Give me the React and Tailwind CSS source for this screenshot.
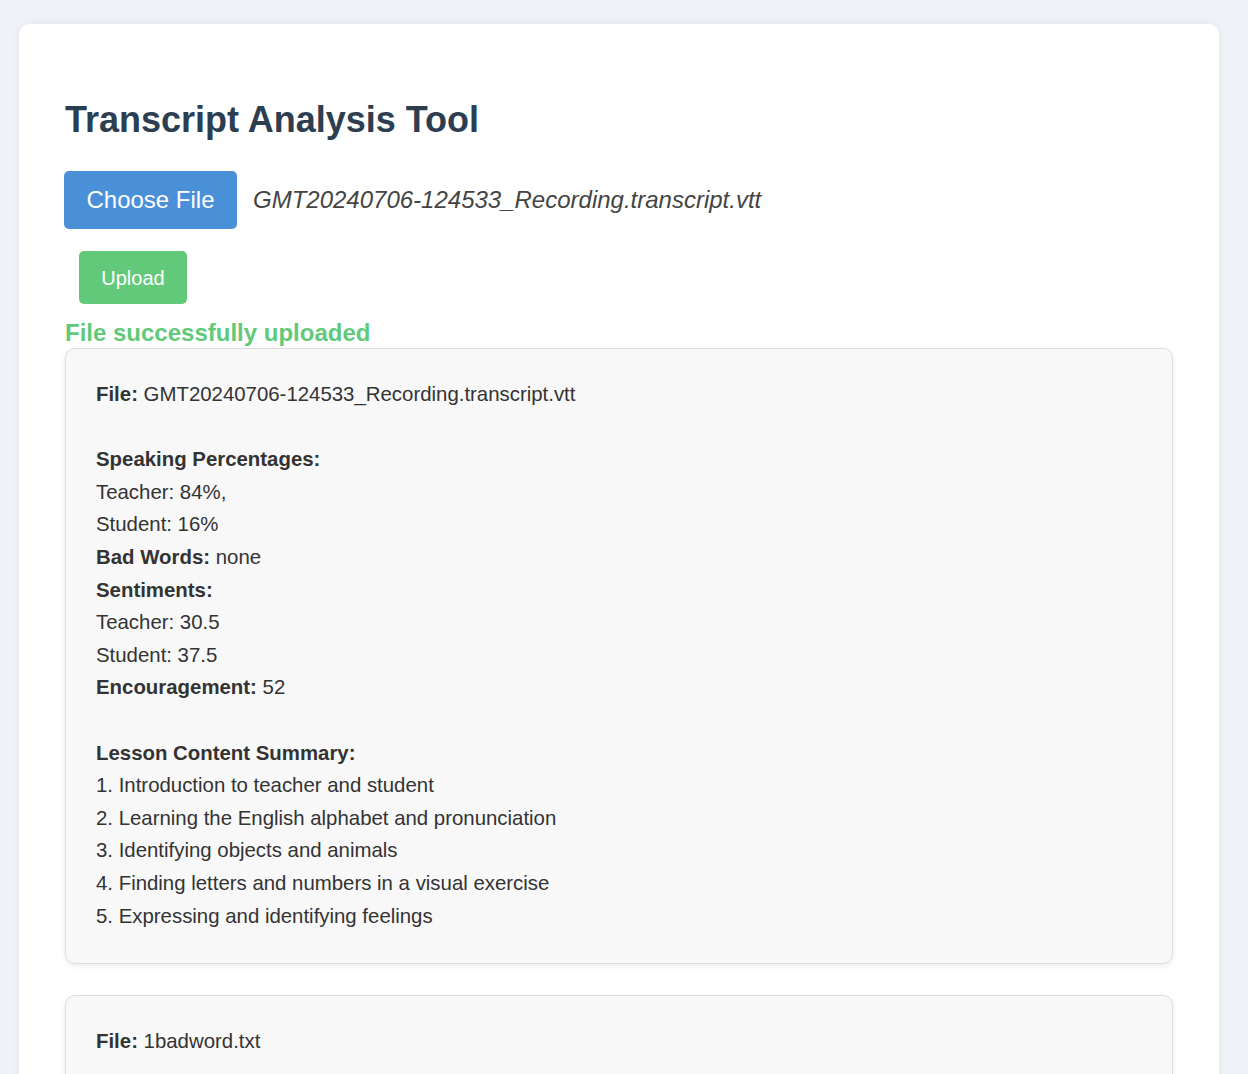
export default function App() {
  const font = { fontFamily: '"Liberation Sans", Arial, sans-serif' };
  const box = "bg-[#f8f8f8] border border-[#dddddd] rounded-[10px] shadow-[0_2px_6px_rgba(0,0,0,0.08)] px-[30px] pt-[29px] pb-[31px] text-[20.4px] leading-[32.6px] text-[#333]";
  return (
    <div className="min-h-[1074px] bg-[#eff2f6] pt-[24px] pl-[19px]" style={font}>
      <div className="w-[1200px] bg-white rounded-[10px] shadow-[0_0_10px_rgba(0,0,0,0.06)] px-[46px] pt-[76px] pb-[40px]">
        <h1 className="text-[36px] font-bold text-[#2c3e50] leading-[41px] mt-[-1px]">Transcript Analysis Tool</h1>
        <div className="flex items-center mt-[31px]">
          <button className="h-[58px] w-[173px] bg-[#4a90d9] text-white text-[24px] rounded-[5px] ml-[-1px]">Choose File</button>
          <span className="ml-[16px] text-[24px] italic text-[#444]">GMT20240706-124533_Recording.transcript.vtt</span>
        </div>
        <button className="mt-[22px] ml-[14px] h-[53px] w-[108px] bg-[#62c97a] text-white text-[20px] rounded-[5px]">Upload</button>
        <div className="mt-[15px] text-[24px] font-bold text-[#62c97a] leading-[28px]">File successfully uploaded</div>
        <div className={"mt-[1px] " + box}>
          <div><b>File:</b> GMT20240706-124533_Recording.transcript.vtt</div>
          <div>&nbsp;</div>
          <div><b>Speaking Percentages:</b></div>
          <div>Teacher: 84%,</div>
          <div>Student: 16%</div>
          <div><b>Bad Words:</b> none</div>
          <div><b>Sentiments:</b></div>
          <div>Teacher: 30.5</div>
          <div>Student: 37.5</div>
          <div><b>Encouragement:</b> 52</div>
          <div>&nbsp;</div>
          <div><b>Lesson Content Summary:</b></div>
          <div>1. Introduction to teacher and student</div>
          <div>2. Learning the English alphabet and pronunciation</div>
          <div>3. Identifying objects and animals</div>
          <div>4. Finding letters and numbers in a visual exercise</div>
          <div>5. Expressing and identifying feelings</div>
        </div>
        <div className={"mt-[31px] " + box}>
          <div><b>File:</b> 1badword.txt</div>
          <div>&nbsp;</div>
          <div><b>Speaking Percentages:</b></div>
          <div>Teacher: 100%,</div>
          <div>Student: 0%</div>
          <div><b>Bad Words:</b> 1</div>
        </div>
      </div>
    </div>
  );
}
